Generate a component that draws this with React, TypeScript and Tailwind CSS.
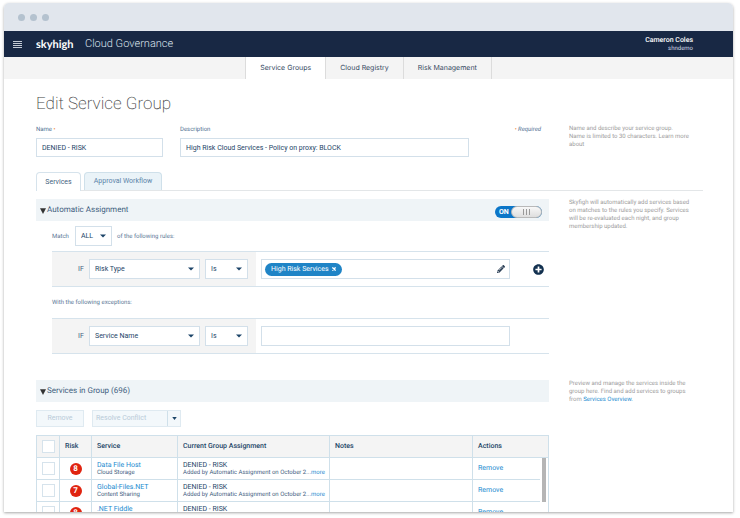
import React, { useState } from 'react';
import clsx from 'clsx';
import { FaPencilAlt, FaPlusCircle } from 'react-icons/fa';

const navTabs = ['Service Groups', 'Cloud Registry', 'Risk Management'];

const services = [
  { risk: 8, name: 'Data File Host', category: 'Cloud Storage' },
  { risk: 7, name: 'Global-Files.NET', category: 'Content Sharing' },
  { risk: 8, name: '.NET Fiddle', category: 'Development' },
];

const Caret: React.FC = () => (
  <svg viewBox="0 0 6 4" className="pointer-events-none absolute right-1.5 top-1/2 h-1 w-1.5 -translate-y-1/2" fill="#1c4468">
    <path d="M0 0.4h6L3 3.6z" />
  </svg>
);

const Select: React.FC<{ label: string; value: string; className: string }> = ({ label, value, className }) => (
  <div className={clsx('relative h-5', className)}>
    <select
      aria-label={label}
      defaultValue={value}
      className="block h-full w-full appearance-none border border-[#d3e0ea] bg-white pl-[5px] pr-3 text-[7px] text-[#234567]"
    >
      <option>{value}</option>
    </select>
    <Caret />
  </div>
);

const Rule: React.FC<{ field: string; children: React.ReactNode; action?: React.ReactNode }> = ({ field, children, action }) => (
  <div className="ml-4 flex h-9 items-stretch border-y border-[#d6e3ec]">
    <div className="flex w-[204px] shrink-0 items-center gap-[5px] bg-[#f4f4f4] pl-[26px]">
      <span className="w-[6px] text-[7px] text-[#3f5f7f]">IF</span>
      <Select label="Field" value={field} className="w-[111px]" />
      <Select label="Operator" value="Is" className="w-[43px]" />
    </div>
    <div className="flex flex-1 items-center pl-[5px]">
      {children}
      <div className="flex w-[39px] shrink-0 justify-end pr-[5px]">{action}</div>
    </div>
  </div>
);

const SectionHeader: React.FC<{ title: string; children?: React.ReactNode }> = ({ title, children }) => (
  <div className="flex h-[22px] items-center bg-[#eff4f7] pl-1 pr-[7px]">
    <svg viewBox="0 0 6 6" className="mr-px mt-0.5 h-1.5 w-1.5" fill="#333">
      <path d="M0 0.3h6L3 6z" />
    </svg>
    <h2 className="flex-1 text-[8px] text-[#3f5f80]">{title}</h2>
    {children}
  </div>
);

const Help: React.FC<{ children: React.ReactNode }> = ({ children }) => (
  <aside className="max-w-[126px] text-[6px] leading-[8px] text-[#9c9c9c]">{children}</aside>
);

const Check: React.FC<{ label: string }> = ({ label }) => (
  <input
    type="checkbox"
    aria-label={label}
    className="mx-auto block h-[13px] w-[13px] appearance-none border border-[#d6e3ec] bg-white checked:bg-[#1b7fc4]"
  />
);

const App: React.FC = () => {
  const [on, setOn] = useState(true);

  return (
    <div className="flex h-screen overflow-hidden bg-white pb-[6px] pl-1 pr-[7px] pt-[3px] font-['Roboto',sans-serif] [text-rendering:geometricPrecision]">
      <div className="flex min-w-0 flex-1 flex-col overflow-hidden rounded-t-[5px] bg-white shadow-[0_1px_3px_rgba(0,0,0,0.35)]">
        <div className="flex h-7 shrink-0 items-center gap-[5px] bg-[#e1e6ed] pl-[14px]">
          <span className="h-[7px] w-[7px] rounded-full bg-[#b4c2cf]"></span>
          <span className="h-[7px] w-[7px] rounded-full bg-[#b4c2cf]"></span>
          <span className="h-[7px] w-[7px] rounded-full bg-[#b4c2cf]"></span>
        </div>

        <header className="flex h-[26px] shrink-0 items-center bg-[#182844] pl-[9px] pr-10 text-white">
          <button aria-label="Menu" className="flex w-[9px] flex-col gap-px">
            <span className="h-px bg-[#c3cad4]"></span>
            <span className="h-px bg-[#c3cad4]"></span>
            <span className="h-px bg-[#c3cad4]"></span>
            <span className="h-px bg-[#c3cad4]"></span>
          </button>
          <span className="ml-[14px] w-[37px] font-['Lato',sans-serif] text-[11px] font-bold leading-none">skyhigh</span>
          <span className="ml-3 flex-1 text-[11px] font-light text-[#dce3ec]">Cloud Governance</span>
          <div className="text-right">
            <div className="text-[7px] font-medium leading-[9px]">Cameron Coles</div>
            <div className="text-[6px] leading-[7px] text-[#d5dbe4]">shndemo</div>
          </div>
        </header>

        <nav className="flex h-[22px] shrink-0 justify-center bg-[#f4f4f4]">
          {navTabs.map((tab, i) => (
            <a
              key={tab}
              href="#"
              className={clsx(
                "flex items-center border-r border-[#dcdcdc] px-[14px] font-['Inter',sans-serif] text-[7px] text-[#34495f]",
                i === 0 && 'border-l bg-white'
              )}
            >
              {tab}
            </a>
          ))}
        </nav>

        <main className="min-h-0 flex-1 overflow-hidden pl-8 pr-[30px] pt-[15px]">
          <h1 className="text-[17px] font-extralight leading-5 text-[#444]">Edit Service Group</h1>

          <div className="mt-[11px] grid grid-cols-[1fr_134px] gap-5">
            <div className="flex gap-[17px] text-[6px] text-[#4f7092]">
              <div className="w-[127px]">
                <label htmlFor="name" className="block h-[10px] leading-[10px]">
                  Name <span className="text-[#f08030]">•</span>
                </label>
                <input
                  id="name"
                  defaultValue="DENIED - RISK"
                  className="mt-[3px] block h-[19px] w-full border border-[#d3e0ea] px-[5px] text-[7px] text-[#234567]"
                />
              </div>
              <div className="w-[289px]">
                <label htmlFor="description" className="block h-[10px] leading-[10px]">Description</label>
                <input
                  id="description"
                  defaultValue="High Risk Cloud Services - Policy on proxy: BLOCK"
                  className="mt-[3px] block h-[19px] w-full border border-[#d3e0ea] px-[5px] text-[7px] text-[#234567]"
                />
              </div>
              <span className="ml-auto pr-2 italic leading-[10px]">
                <span className="text-[#f08030]">•</span> Required
              </span>
            </div>
            <Help>
              Name and describe your service group.
              <br />
              Name is limited to 30 characters. Learn more
              <br />
              about
            </Help>
          </div>

          <div className="mt-[15px] flex items-end gap-[3px] border-b border-[#e3e6e8]">
            <button className="-mb-px h-[19px] w-[45px] rounded-t-sm border border-b-0 border-[#d6e3ec] bg-white text-[7px] text-[#3f5f80]">
              Services
            </button>
            <button className="h-[18px] w-[78px] rounded-t-sm border border-b-0 border-[#cfe0ea] bg-[#eaf3f8] text-[7px] text-[#5a83a8]">
              Approval Workflow
            </button>
          </div>

          <div className="mt-2 grid grid-cols-[1fr_134px] gap-5">
            <section>
              <SectionHeader title="Automatic Assignment">
                <label className="relative mt-1 flex h-3 w-[47px] items-center rounded-full bg-[#0c76c8] pl-1 text-[7px] font-bold text-white">
                  <input
                    type="checkbox"
                    role="switch"
                    aria-label="Automatic Assignment"
                    checked={on}
                    onChange={() => setOn(!on)}
                    className="absolute inset-0 appearance-none"
                  />
                  {on ? 'ON' : 'OFF'}
                  <span className="absolute right-0 top-0 flex h-3 w-[31px] items-center justify-center gap-0.5 rounded-full border border-[#b9b9b9] bg-linear-to-b from-[#f8f8f8] to-[#dedede]">
                    <span className="h-1.5 w-px bg-[#999]"></span>
                    <span className="h-1.5 w-px bg-[#999]"></span>
                    <span className="h-1.5 w-px bg-[#999]"></span>
                  </span>
                </label>
              </SectionHeader>

              <div className="my-[5px] flex h-5 items-center gap-[5px] pl-4 text-[6px] text-[#5b7896]">
                <span className="w-[18px]">Match</span>
                <Select label="Match" value="ALL" className="w-[37px]" />
                <span>of the following rules:</span>
              </div>

              <Rule
                field="Risk Type"
                action={
                  <button aria-label="Add rule">
                    <FaPlusCircle size={11} color="#12304f" />
                  </button>
                }
              >
                <div className="flex h-5 flex-1 items-center justify-between border border-[#d3e0ea] bg-white pl-[3px] pr-1">
                  <span className="flex h-[13px] items-center gap-[3px] rounded-full bg-[#1f84c6] px-[6px] text-[7px] text-white">
                    High Risk Services
                    <button aria-label="Remove High Risk Services">
                      <svg viewBox="0 0 4 4" className="h-1 w-1" stroke="#fff" strokeWidth="1.3">
                        <path d="M0.4 0.4l3.2 3.2M3.6 0.4L0.4 3.6" />
                      </svg>
                    </button>
                  </span>
                  <button aria-label="Edit values">
                    <FaPencilAlt size={8} color="#2c4057" />
                  </button>
                </div>
              </Rule>

              <p className="ml-4 text-[6px] leading-[31px] text-[#5b7896]">With the following exceptions:</p>

              <Rule field="Service Name">
                <input aria-label="Exception value" className="h-5 min-w-0 flex-1 border border-[#d3e0ea] bg-white px-[5px] text-[7px]" />
              </Rule>
            </section>
            <Help>
              Skyfigh will automatically add services based on matches to the rules you specify. Services will be
              re-evaluated each night, and group membership updated.
            </Help>
          </div>

          <div className="mt-[26px] grid grid-cols-[1fr_134px] gap-5">
            <section>
              <SectionHeader title="Services in Group (696)" />

              <div className="my-2 flex h-[17px] gap-2 text-[7px] text-[#b9cbd9]">
                <button className="w-12 border border-[#dfeaf1] bg-[#f3f8fb]">Remove</button>
                <div className="flex w-[89px] border border-[#dfeaf1] bg-[#f3f8fb]">
                  <button className="flex-1 pl-[3px] text-left">Resolve Conflict</button>
                  <button aria-label="More actions" className="w-[13px] border-l border-[#cfe0ea]">
                    <svg viewBox="0 0 6 4" className="mx-auto h-[3px] w-[5px]" fill="#1c4468">
                      <path d="M0 0h6L3 4z" />
                    </svg>
                  </button>
                </div>
              </div>

              <div className="relative">
                <table className="w-full table-fixed border-collapse text-left text-[7px] text-[#234567]">
                  <thead>
                    <tr className="h-[22px] bg-[#f4f4f4] *:border *:border-[#cfe0ea] *:font-medium">
                      <th className="w-[23px]"><Check label="Select all" /></th>
                      <th className="w-8 pl-[5px]">Risk</th>
                      <th className="w-[86px] pl-[5px]">Service</th>
                      <th className="w-[152px] pl-[5px]">Current Group Assignment</th>
                      <th className="w-[143px] pl-[5px]">Notes</th>
                      <th className="pl-[5px]">Actions</th>
                    </tr>
                  </thead>
                  <tbody>
                    {services.map((s) => (
                      <tr key={s.name} className="h-[22px] *:border *:border-[#cfe0ea] *:whitespace-nowrap">
                        <td><Check label={s.name} /></td>
                        <td>
                          <span className="mx-auto block h-3 w-3 rounded-full bg-[#e02410] text-center text-[8px] font-bold leading-3 text-white">
                            {s.risk}
                          </span>
                        </td>
                        <td className="pl-[5px]">
                          <a href="#" className="block leading-[8px] text-[#1b8bd0]">{s.name}</a>
                          <div className="text-[6px] leading-[7px] text-[#44617f]">{s.category}</div>
                        </td>
                        <td className="pl-[5px]">
                          <div className="leading-[8px]">DENIED - RISK</div>
                          <div className="text-[6px] leading-[7px] text-[#44617f]">
                            Added by Automatic Assignment on October 2...<a href="#" className="text-[#1b8bd0]">more</a>
                          </div>
                        </td>
                        <td></td>
                        <td className="pl-[5px]"><a href="#" className="text-[#1b8bd0]">Remove</a></td>
                      </tr>
                    ))}
                  </tbody>
                </table>
                <div className="absolute bottom-0 right-px top-[23px] w-2 bg-white">
                  <div className="ml-0.5 h-11 w-1 bg-[#b5b5b5]"></div>
                </div>
              </div>
            </section>
            <Help>
              Preview and manage the services inside the group here. Find and add services to groups from{' '}
              <a href="#" className="text-[#1b8bd0]">Services Overview.</a>
            </Help>
          </div>
        </main>
      </div>
    </div>
  );
};

export default App;
